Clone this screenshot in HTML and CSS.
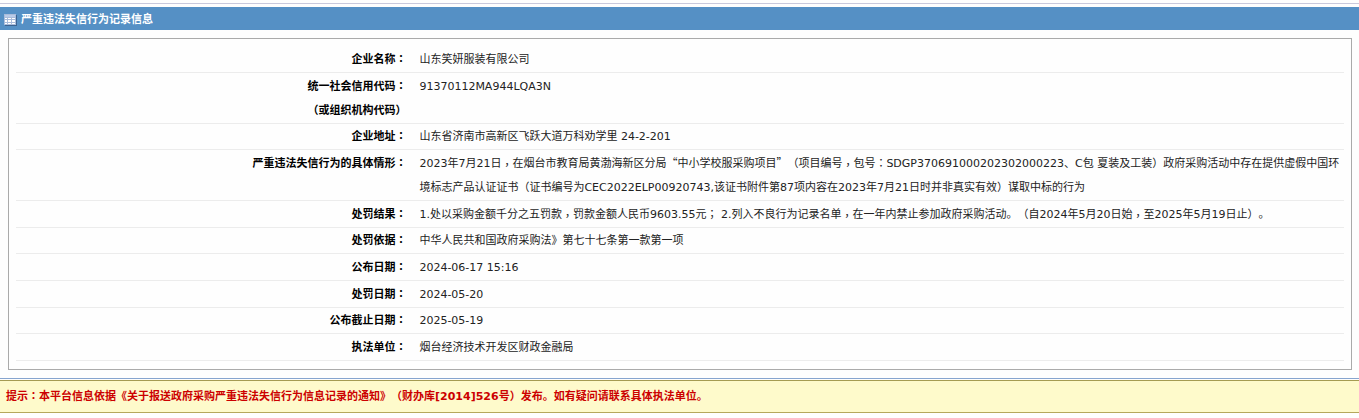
FILE: index.html
```
<!DOCTYPE html>
<html lang="zh-CN">
<head>
    <meta charset="UTF-8">
    <meta name="viewport" content="width=device-width, initial-scale=1.0">
    <title>严重违法失信行为记录信息</title>
    <link rel="stylesheet" href="styles.css">
</head>
<body>
    <header class="title-bar">
        <svg class="title-icon" width="13" height="12" viewBox="0 0 13 12" aria-hidden="true">
            <rect x="1" y="1" width="12" height="11" fill="#3c6390"/>
            <rect x="0" y="0" width="12" height="11" fill="#a9bcdb"/>
            <rect x="1" y="1" width="10" height="2" fill="#b9cbe8"/>
            <path d="M1 4h2v1H1zM4 4h3v1H4zM8 4h3v1H8zM1 6h2v2H1zM4 6h3v2H4zM8 6h3v2H8zM1 9h2v1H1zM4 9h3v1H4zM8 9h3v1H8z" fill="#fff"/>
        </svg>
        <h1 class="title">严重违法失信行为记录信息</h1>
    </header>
    <main class="panel">
        <table class="info-table">
            <tr>
                <th scope="row">企业名称<span class="mid" lang="zh-TW">：</span></th>
                <td>山东笑妍服装有限公司</td>
            </tr>
            <tr>
                <th scope="row">统一社会信用代码<span class="mid" lang="zh-TW">：</span><br>（或组织机构代码）</th>
                <td>91370112MA944LQA3N</td>
            </tr>
            <tr>
                <th scope="row">企业地址<span class="mid" lang="zh-TW">：</span></th>
                <td>山东省济南市高新区飞跃大道万科劝学里 24-2-201</td>
            </tr>
            <tr>
                <th scope="row">严重违法失信行为的具体情形<span class="mid" lang="zh-TW">：</span></th>
                <td>2023年7月21日<span class="mid comma" lang="zh-TW">，</span>在烟台市教育局黄渤海新区分局<span class="quote">“</span>中小学校服采购项目<span class="quote">”</span>（项目编号<span class="mid comma" lang="zh-TW">，</span>包号<span class="mid" lang="zh-TW">：</span>SDGP370691000202302000223、C包 夏装及工装）政府采购活动中存在提供虚假中国环境标志产品认证证书（证书编号为CEC2022ELP00920743,该证书附件第87项内容在2023年7月21日时并非真实有效）谋取中标的行为</td>
            </tr>
            <tr>
                <th scope="row">处罚结果<span class="mid" lang="zh-TW">：</span></th>
                <td>1.处以采购金额千分之五罚款<span class="mid comma" lang="zh-TW">，</span>罚款金额人民币9603.55元<span class="mid" lang="zh-TW">；</span> 2.列入不良行为记录名单<span class="mid comma" lang="zh-TW">，</span>在一年内禁止参加政府采购活动。（自2024年5月20日始<span class="mid comma" lang="zh-TW">，</span>至2025年5月19日止）。</td>
            </tr>
            <tr>
                <th scope="row">处罚依据<span class="mid" lang="zh-TW">：</span></th>
                <td>中华人民共和国政府采购法》第七十七条第一款第一项</td>
            </tr>
            <tr>
                <th scope="row">公布日期<span class="mid" lang="zh-TW">：</span></th>
                <td>2024-06-17 15:16</td>
            </tr>
            <tr>
                <th scope="row">处罚日期<span class="mid" lang="zh-TW">：</span></th>
                <td>2024-05-20</td>
            </tr>
            <tr>
                <th scope="row">公布截止日期<span class="mid" lang="zh-TW">：</span></th>
                <td>2025-05-19</td>
            </tr>
            <tr>
                <th scope="row">执法单位<span class="mid" lang="zh-TW">：</span></th>
                <td>烟台经济技术开发区财政金融局</td>
            </tr>
        </table>
    </main>
    <footer class="notice-wrap">
        <p class="notice">提示<span class="mid" lang="zh-TW">：</span>本平台信息依据《关于报送政府采购严重违法失信行为信息记录的通知》（财办库[2014]526号）发布。如有疑问请联系具体执法单位。</p>
    </footer>
</body>
</html>
```
FILE: styles.css
```
body {
    margin: 0;
    padding-top: 3px;
    background-color: #fefefe;
    font-family: "DejaVu Sans", "Noto Sans CJK SC", sans-serif;
    font-size: 11px;
    line-height: 24px;
    color: #222;
    text-spacing-trim: space-all;
}
.title-bar {
    display: flex;
    align-items: center;
    gap: 4px;
    height: 23px;
    padding: 3px 4px 0;
    border-top: 1px solid #c9c9dc;
    background-color: #5590c5;
    box-shadow: inset 0 3px 0 #fefefe;
}
.title-bar .title-icon {
    margin-top: 2px;
}
.title {
    margin: 0;
    padding-top: 2px;
    font-size: 11px;
    font-weight: bold;
    color: white;
}
.panel {
    margin: 8px 7px 8px 8px;
    padding: 7px 7px 8px;
    border: 1px solid #aaa;
}
.info-table {
    width: 100%;
    border-spacing: 0;
}
.info-table th,
.info-table td {
    padding: 2px 0 0 5px;
    border-bottom: 1px solid #ececec;
    vertical-align: top;
}
.info-table tr:nth-child(3n) th,
.info-table tr:nth-child(3n) td {
    padding-top: 1px;
}
.info-table th {
    width: 30%;
    box-sizing: border-box;
    padding-right: 8px;
    text-align: right;
    font-weight: bold;
    color: black;
}
.info-table td {
    text-align: left;
}
/* punctuation centred in its full-width box */
.mid {
    font-family: "Noto Sans CJK TC", sans-serif;
    line-height: 1;
}
.comma {
    vertical-align: -2px;
}
.quote {
    font-family: "Noto Sans CJK SC", sans-serif;
    line-height: 1;
}
.notice-wrap {
    padding-top: 1px;
    border-top: 1px solid #87a5cf;
}
.notice {
    margin: 0;
    padding: 4px 6px 3px;
    border-top: 1px solid #a59b52;
    border-bottom: 1px solid #b5a75c;
    background-color: #fefacb;
    font-weight: bold;
    color: #c00;
}
```
